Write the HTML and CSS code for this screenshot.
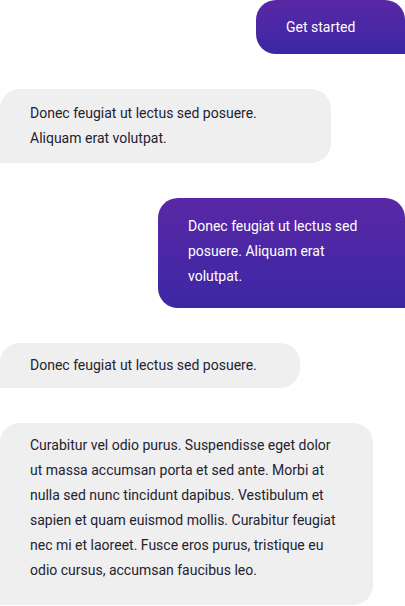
FILE: index.html
```html
<!DOCTYPE html>
<html>
<head>
<meta charset="utf-8">
<link rel="stylesheet" href="styles.css">
</head>
<body>
<div class="chat">
  <div class="msg out start">Get started</div>
  <div class="msg in w2">Donec feugiat ut lectus sed posuere. Aliquam erat volutpat.</div>
  <div class="msg out w3">Donec feugiat ut lectus sed posuere. Aliquam erat volutpat.</div>
  <div class="msg in w4">Donec feugiat ut lectus sed posuere.</div>
  <div class="msg in w5">Curabitur vel odio purus. Suspendisse eget dolor ut massa accumsan porta et sed ante. Morbi at nulla sed nunc tincidunt dapibus. Vestibulum et sapien et quam euismod mollis. Curabitur feugiat nec mi et laoreet. Fusce eros purus, tristique eu odio cursus, accumsan faucibus leo.</div>
</div>
</body>
</html>
```

FILE: styles.css
```css
html, body {
  margin: 0;
  padding: 0;
  background: #ffffff;
}
body {
  font-family: Roboto, "Liberation Sans", sans-serif;
  font-size: 14px;
  line-height: 25px;
  color: #24222f;
}
.chat {
  display: flex;
  flex-direction: column;
  gap: 35px;
}
.msg {
  box-sizing: border-box;
  padding: 12px 30px;
}
.in {
  align-self: flex-start;
  background: #efeff0;
  border-radius: 20px 20px 20px 0;
}
.out {
  align-self: flex-end;
  color: #ffffff;
  background: linear-gradient(180deg, #5a27a6 0%, #3b28a4 100%);
  border-radius: 20px 20px 0 20px;
}
.start {
  width: 149px;
  height: 54px;
  padding: 15px 30px 14px;
}
.w2 { width: 331px; }
.w3 { width: 247px; padding: 16px 30px 19px; }
.w4 { width: 300px; padding: 10px 30px; }
.w5 { width: 373px; padding: 10px 30px 22px; }
```
